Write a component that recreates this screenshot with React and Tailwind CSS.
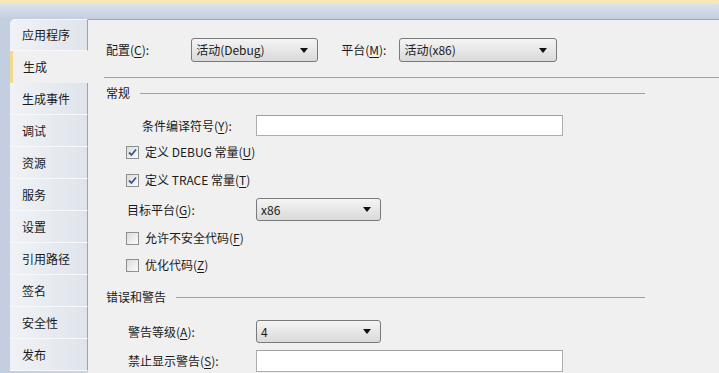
import React from "react";

const tabs = [
  "应用程序",
  "生成",
  "生成事件",
  "调试",
  "资源",
  "服务",
  "设置",
  "引用路径",
  "签名",
  "安全性",
  "发布",
];

const Key = ({ k }) => <span className="underline underline-offset-2">{k}</span>;

const Label = ({ text, k, colon = true }) => (
  <span>
    {text}(<Key k={k} />){colon ? ":" : ""}
  </span>
);

const Select = ({ value, width }) => (
  <div
    className={`${width} h-full flex items-center justify-between rounded-[3px] border border-[#7a7a7a] bg-gradient-to-b from-[#f4f4f4] to-[#dadada] pl-[4px] pr-[9px]`}
  >
    <span>{value}</span>
    <svg width="8" height="5" viewBox="0 0 8 5">
      <path d="M0 0 L8 0 L4 5 Z" fill="#111" />
    </svg>
  </div>
);

const Check = ({ checked, children }) => (
  <div className="flex items-center h-[20px] ml-[38px]">
    <div className="w-[13px] h-[13px] border border-[#8e8f8f] bg-gradient-to-br from-[#dcdcdc] to-[#fbfbfb] flex items-center justify-center">
      {checked && (
        <svg width="9" height="9" viewBox="0 0 9 9">
          <path d="M1 4.5 L3.5 7 L8 1.5" stroke="#3a5a8a" strokeWidth="1.8" fill="none" />
        </svg>
      )}
    </div>
    <span className="ml-[6px]">{children}</span>
  </div>
);

const GroupHeader = ({ title }) => (
  <div className="flex items-center h-[18px] ml-[18px] w-[539px]">
    <span>{title}</span>
    <div className="flex-1 ml-[10px] h-px bg-[#a0a0a0]" />
  </div>
);

export default function App() {
  return (
    <div
      className="w-[719px] h-[373px] overflow-hidden flex flex-col bg-[#c6d0e0] text-[12px] text-[#1a1a1a]"
      style={{ fontFamily: '"Noto Sans CJK SC", "Noto Sans", sans-serif' }}
    >
      <div className="h-[4px] bg-[#f6e6b4] shrink-0" />
      <div className="h-[15px] bg-gradient-to-b from-[#dbe2ec] to-[#c3cddd] shrink-0" />
      <div className="flex flex-1">
        {/* side tabs */}
        <div className="w-[88px] shrink-0 bg-gradient-to-r from-[#c3cee0] to-[#cbd4e2] pl-[10px]">
          {tabs.map((t, i) => {
            const sel = t === "生成" && i === 1;
            return (
              <div
                key={i}
                className={
                  sel
                    ? "h-[32px] flex items-center pl-[10px] bg-[#f0f0f0] border-l-[3px] border-[#f3d98c]"
                    : `h-[32px] flex items-center pl-[12px] bg-gradient-to-r from-[#f0f2f5] to-[#dfe4ec] border-r border-[#98a3b4] border-b border-b-[#f7f8fa] ${
                        i === 0 ? "rounded-tl-[5px] border-t border-t-[#f7f8fa]" : ""
                      }`
                }
              >
                {t}
              </div>
            );
          })}
        </div>

        {/* main panel */}
        <div className="flex-1 bg-[#f0f0f0] border-t border-[#9ea8b6]">
          <div className="flex items-center h-[24px] mt-[18px] ml-[18px]">
            <Label text="配置" k="C" />
            <div className="ml-[42px] h-full flex">
              <Select value="活动(Debug)" width="w-[127px]" />
            </div>
            <span className="ml-[23px]">
              <Label text="平台" k="M" />
            </span>
            <div className="ml-[13px] h-full flex">
              <Select value="活动(x86)" width="w-[158px]" />
            </div>
          </div>

          <div className="mt-[15px] ml-[16px] h-px bg-[#a0a0a0]" />

          <div className="mt-[6px]">
            <GroupHeader title="常规" />
          </div>

          <div className="flex items-center h-[21px] mt-[13px]">
            <span className="ml-[54px] w-[114px]">
              <Label text="条件编译符号" k="Y" />
            </span>
            <div className="w-[307px] h-full bg-white border border-[#abadb3] border-t-[#a0a0a0]" />
          </div>

          <div className="mt-[6px]">
            <Check checked>
              定义 DEBUG 常量(<Key k="U" />)
            </Check>
          </div>
          <div className="mt-[8px]">
            <Check checked>
              定义 TRACE 常量(<Key k="T" />)
            </Check>
          </div>

          <div className="flex items-center h-[23px] mt-[8px]">
            <span className="ml-[39px] w-[129px]">
              <Label text="目标平台" k="G" />
            </span>
            <div className="h-full flex">
              <Select value="x86" width="w-[125px]" />
            </div>
          </div>

          <div className="mt-[7px]">
            <Check>
              允许不安全代码(<Key k="F" />)
            </Check>
          </div>
          <div className="mt-[7px]">
            <Check>
              优化代码(<Key k="Z" />)
            </Check>
          </div>

          <div className="mt-[13px]">
            <GroupHeader title="错误和警告" />
          </div>

          <div className="flex items-center h-[23px] mt-[14px]">
            <span className="ml-[40px] w-[128px]">
              <Label text="警告等级" k="A" />
            </span>
            <div className="h-full flex">
              <Select value="4" width="w-[125px]" />
            </div>
          </div>

          <div className="flex items-center h-[22px] mt-[7px]">
            <span className="ml-[40px] w-[128px]">
              <Label text="禁止显示警告" k="S" />
            </span>
            <div className="w-[307px] h-full bg-white border border-[#abadb3] border-t-[#a0a0a0]" />
          </div>
        </div>
      </div>
    </div>
  );
}
